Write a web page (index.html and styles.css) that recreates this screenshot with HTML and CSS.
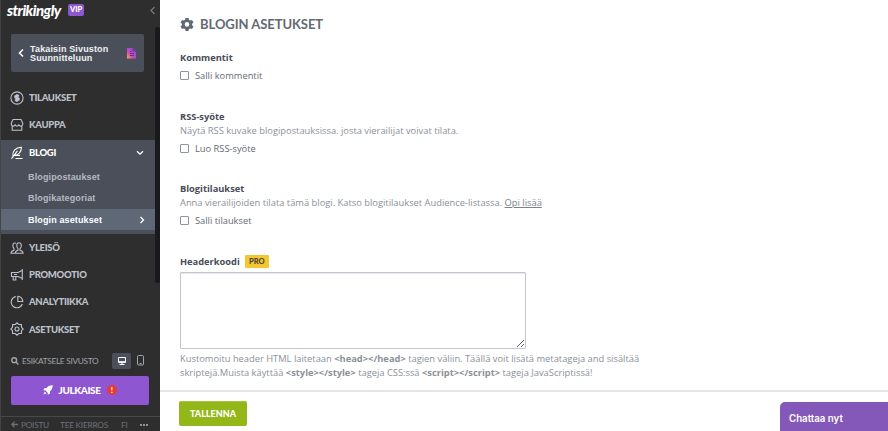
FILE: index.html
```html
<!DOCTYPE html>
<html lang="fi">
<head>
    <meta charset="UTF-8">
    <meta name="viewport" content="width=device-width, initial-scale=1.0">
    <title>Blogin asetukset</title>
    <link rel="stylesheet" href="styles.css">
</head>
<body>
    <aside class="sidebar">
        <div class="menu">
            <div class="brand">
                <span class="logo">strikingly</span>
                <span class="vip">VIP</span>
            </div>
            <a class="back">
                <svg class="back-arrow" width="6" height="10" viewBox="0 0 6 10"><path d="M5 1.5L1.5 5L5 8.5" /></svg>
                <span class="back-text">Takaisin Sivuston<br>Suunnitteluun</span>
                <svg class="site-icon" width="10" height="12" viewBox="0 0 10 12">
                    <defs>
                        <linearGradient id="site" x1="0" y1="1" x2="1" y2="0">
                            <stop offset="0" stop-color="#ffb13d" />
                            <stop offset="0.35" stop-color="#d04fb0" />
                            <stop offset="1" stop-color="#7b45e8" />
                        </linearGradient>
                    </defs>
                    <path d="M0 1h6l3 3v7.500H0z" fill="url(#site)" />
                    <path d="M6 1v3h3M3 4.5h1.5M3 6.5h4M3 8.5h4" fill="none" stroke="#54357c" stroke-width="0.9" />
                </svg>
            </a>
            <nav>
                <a class="item">
                    <svg class="icon" viewBox="0 0 14 14"><circle cx="7" cy="7" r="6.100" /><path d="M9.200 4.8H6.2a1.1 1.1 0 0 0 0 2.2h1.6a1.1 1.1 0 0 1 0 2.2H4.800M7 3.200v7.600" stroke-width="2" /></svg>
                    <span>TILAUKSET</span>
                </a>
                <a class="item kauppa">
                    <svg class="icon" viewBox="0 0 14 14"><path d="M3 1.500h8l1.7 3.700v1a1.9 1.9 0 0 1-3.8 0a1.9 1.9 0 0 1-3.8 0a1.9 1.9 0 0 1-3.8 0v-1zM2.2 8v4.3h9.6V8" /></svg>
                    <span>KAUPPA</span>
                </a>
                <div class="group">
                    <a class="item active">
                        <svg class="icon" viewBox="0 0 14 14"><path d="M2.800 9.8C2.300 5 5.500 1.500 11.500 1.200C11.200 5.500 9.500 8.700 4.500 9.400M1.500 12.700L7.500 4.800M5.500 12.500h7M4.500 9.400h5.500" /></svg>
                        <span>BLOGI</span>
                        <svg class="chevron" width="8" height="6" viewBox="0 0 8 6"><path d="M1 1.200L4 4.200L7 1.200" /></svg>
                    </a>
                    <a class="sub">Blogipostaukset</a>
                    <a class="sub">Blogikategoriat</a>
                    <a class="sub current">Blogin asetukset
                        <svg class="chevron" width="6" height="8" viewBox="0 0 6 8"><path d="M1.500 1L4.500 4L1.500 7" /></svg>
                    </a>
                </div>
                <a class="item">
                    <svg class="icon" viewBox="0 0 14 14"><path d="M5.300 12.300h7.700c0-2.100-1-2.600-3-3.100V7.800c1.100-1 1.500-2.300 1.300-3.800C10.900.9 7 .9 6.800 4c-.1 1.500.2 2.800 1.200 3.800v1.400c-1.800.5-2.700 1-2.700 3.100zM6 2.300C4 1.400 2.700 2.800 2.900 4.800c0 1.200.4 2.100 1.100 2.900v1.500c-1.800.5-2.900 1-3 3.100h4" /></svg>
                    <span>YLEISÖ</span>
                </a>
                <a class="item">
                    <svg class="icon" viewBox="0 0 14 14"><path d="M12.300 1v11M12 2.500L8 4.500H1.500v4H8l4 1.800M3.200 8.500v3.500h2.600V8.500M4 6.500h3" /></svg>
                    <span>PROMOOTIO</span>
                </a>
                <a class="item">
                    <svg class="icon" viewBox="0 0 14 14"><path d="M5.800 1.500A5.700 5.700 0 1 0 12.300 9M7.800 1.200v5.300h5A5.200 5.200 0 0 0 7.800 1.200z" /></svg>
                    <span>ANALYTIIKKA</span>
                </a>
                <a class="item">
                    <svg class="icon" viewBox="0 0 14 14"><path d="M7 .8L8.700 2.500L11.400 2.600L11.500 5.300L13.200 7L11.500 8.700L11.400 11.400L8.700 11.500L7 13.200L5.300 11.500L2.600 11.400L2.500 8.700L.8 7L2.500 5.300L2.600 2.600L5.300 2.500z" /><circle cx="7" cy="7" r="2" /></svg>
                    <span>ASETUKSET</span>
                </a>
            </nav>
            <div class="preview">
                <svg class="search" width="8" height="8" viewBox="0 0 8 8"><circle cx="3.200" cy="3.200" r="2.400" /><path d="M5 5l2.400 2.400" /></svg>
                <span class="preview-text">ESIKATSELE SIVUSTO</span>
                <span class="device selected">
                    <svg width="10" height="10" viewBox="0 0 10 10"><path d="M1.500 1.500h7v5h-7zM1.500 5.700h7M5 6.500v2M2.500 8.500h5" /></svg>
                </span>
                <span class="device">
                    <svg width="8" height="11" viewBox="0 0 8 11"><rect x="0.500" y="0.500" width="6" height="9.500" rx="1" /><path d="M2.500 8.500h2" /></svg>
                </span>
            </div>
            <button class="publish">
                <svg width="10" height="10" viewBox="0 0 10 10"><path d="M9.700.3C6.800.2 5 1.300 3.700 3H1.600L.3 5.200l2 .1L4.700 7.700l.1 2L7 8.400V6.300C8.700 5 9.800 3.200 9.700.3zM1.700 6.600L.5 9.500l2.900-1.200z" /></svg>
                <span class="publish-text">JULKAISE</span>
                <span class="alert">!</span>
            </button>
            <footer class="links">
                <svg width="7" height="7" viewBox="0 0 7 7"><path d="M3.500.6L.8 3.500l2.700 2.900M1 3.500h6" /></svg>
                <span class="exit">POISTU</span>
                <span class="tour">TEE KIERROS</span>
                <span class="lang">FI</span>
                <span class="dots"><i></i><i></i><i></i></span>
            </footer>
        </div>
        <div class="rail">
            <svg class="collapse" width="6" height="9" viewBox="0 0 6 9"><path d="M4.500 1L1 4.500L4.500 8" /></svg>
            <div class="thumb"></div>
        </div>
    </aside>

    <main class="content">
        <div class="settings">
            <h1>
                <svg width="14" height="14" viewBox="0 0 14 14"><path fill-rule="evenodd" d="M5.500 1h3l.4 1.800 1.300.7 1.800-.6 1.500 2.600-1.400 1.200v1.500l1.400 1.200-1.500 2.600-1.800-.6-1.300.7-.4 1.800h-3l-.4-1.800-1.300-.7-1.800.6L.5 9.400l1.400-1.200V6.700L.5 5.500 2 2.900l1.800.6 1.300-.7zM7 5.100a2.300 2.300 0 1 0 0 4.600a2.300 2.300 0 1 0 0-4.600z" /></svg>
                <span>BLOGIN ASETUKSET</span>
            </h1>

            <section class="comments">
                <h2>Kommentit</h2>
                <label class="check"><input type="checkbox"><span>Salli kommentit</span></label>
            </section>

            <section class="rss">
                <h2>RSS-syöte</h2>
                <p>Näytä RSS kuvake blogipostauksissa. josta vierailijat voivat tilata.</p>
                <label class="check"><input type="checkbox"><span>Luo RSS-syöte</span></label>
            </section>

            <section class="subscriptions">
                <h2>Blogitilaukset</h2>
                <p>Anna vierailijoiden tilata tämä blogi. Katso blogitilaukset Audience-listassa. <a>Opi lisää</a></p>
                <label class="check"><input type="checkbox"><span>Salli tilaukset</span></label>
            </section>

            <section class="header-code">
                <h2>Headerkoodi <span class="pro">PRO</span></h2>
                <textarea></textarea>
                <p>Kustomoitu header HTML laitetaan <b>&lt;head&gt;&lt;/head&gt;</b> tagien väliin. Täällä voit lisätä metatageja and sisältää<br>skriptejä.Muista käyttää <b>&lt;style&gt;&lt;/style&gt;</b> tageja CSS:ssä <b>&lt;script&gt;&lt;/script&gt;</b> tageja JavaScriptissä!</p>
            </section>
        </div>
        <div class="actions">
            <button class="save">TALLENNA</button>
        </div>
    </main>
    <div class="chat">Chattaa nyt</div>
</body>
</html>
```

FILE: styles.css
```css
* {
    box-sizing: border-box;
}

body {
    display: flex;
    height: 431px;
    margin: 0;
    overflow: hidden;
    font-family: "Open Sans", sans-serif;
    background-color: #fff;
}

h1, h2, p {
    margin: 0;
}

button {
    border: none;
    padding: 0;
}

svg {
    flex: none;
}

/* Sidebar */
.sidebar {
    display: flex;
    flex: none;
    width: 160px;
    background-color: #2e2e2e;
    border-left: 1px solid #444;
}

.menu {
    width: 154px;
    font-family: Lato, sans-serif;
}

.brand {
    display: flex;
    align-items: center;
    height: 20px;
    padding-left: 6px;
}

.logo {
    width: 61px;
    color: #fff;
    font-size: 15px;
    font-weight: 900;
    font-style: italic;
    letter-spacing: -0.55px;
    line-height: 18px;
}

.vip {
    width: 16px;
    height: 12px;
    border-radius: 2px;
    background-color: #8e56d0;
    color: #fff;
    font-size: 7.5px;
    font-weight: 900;
    line-height: 12px;
    text-align: center;
}

.back {
    display: flex;
    align-items: center;
    width: 133px;
    height: 38px;
    margin: 14px 0 12px 10px;
    padding: 0 7px;
    border-radius: 2px;
    background-color: #4b4f59;
}

.back-arrow {
    fill: none;
    stroke: #fff;
    stroke-width: 1.5;
}

.back-text {
    width: 91px;
    margin: 1px 6px 0;
    color: #f0f1f4;
    font-family: "Liberation Sans", sans-serif;
    font-size: 9px;
    font-weight: bold;
    line-height: 9px;
    letter-spacing: 0.15px;
    white-space: nowrap;
}

.item {
    display: flex;
    align-items: center;
    height: 27.2px;
    padding: 0 11px 0 9px;
    color: #bcc1cb;
    font-size: 9.5px;
    font-weight: 900;
    letter-spacing: -0.3px;
}

.kauppa {
    height: 28.8px;
    padding-bottom: 2px;
}

.icon {
    width: 14px;
    height: 14px;
    margin-right: 5px;
    fill: none;
    stroke: currentColor;
    stroke-width: 1.1;
}

.group {
    height: 94px;
    background-color: #4b4f59;
}

.active {
    height: 26px;
    color: #fff;
}

.chevron {
    margin-left: auto;
    fill: none;
    stroke: #fff;
    stroke-width: 1.3;
}

.sub {
    display: flex;
    align-items: center;
    height: 21.5px;
    padding: 0 10px 0 27px;
    color: #b5bac4;
    font-family: "Liberation Sans", sans-serif;
    font-size: 9px;
    font-weight: bold;
    letter-spacing: 0.13px;
}

.current {
    background-color: #5e6877;
    color: #fff;
}

.preview {
    display: flex;
    align-items: center;
    height: 16px;
    margin-top: 10px;
    padding-left: 10px;
    color: #a0a4ab;
}

.search {
    fill: none;
    stroke: currentColor;
    stroke-width: 1.4;
}

.preview-text {
    width: 90px;
    padding-left: 3px;
    font-size: 8.3px;
    letter-spacing: -0.3px;
    white-space: nowrap;
}

.device {
    display: flex;
    align-items: center;
    justify-content: center;
    width: 19px;
    height: 16px;
    border-radius: 2px;
    fill: none;
    stroke: #a0a4ab;
    stroke-width: 1;
}

.selected {
    margin-left: 3px;
    background-color: #4b4f59;
    stroke: #fff;
}

.publish {
    display: flex;
    align-items: center;
    width: 138px;
    height: 29px;
    margin: 7px 0 11px 10px;
    padding-left: 32px;
    border-radius: 2px;
    background-color: #8e56d0;
    color: #fff;
    fill: #fff;
    font-family: Lato, sans-serif;
    font-size: 10px;
    font-weight: 900;
}

.publish-text {
    width: 48px;
    padding-left: 5px;
    letter-spacing: -0.4px;
    white-space: nowrap;
}

.alert {
    flex: none;
    width: 10px;
    height: 10px;
    margin-left: 6px;
    border-radius: 50%;
    background-color: #e93a32;
    font-size: 8px;
    line-height: 10px;
}

.links {
    display: flex;
    align-items: center;
    width: 159px;
    height: 15px;
    padding: 2px 0 0 10px;
    border-top: 1px solid #484848;
    color: #6d7077;
    font-size: 8.3px;
    letter-spacing: -0.25px;
    fill: none;
    stroke: #6d7077;
    stroke-width: 1.3;
}

.links span {
    white-space: nowrap;
}

.exit {
    width: 39px;
    padding-left: 3px;
}

.tour {
    width: 61px;
    padding-left: 3px;
}

.lang {
    width: 19px;
    padding-left: 3px;
}

.dots {
    display: flex;
    gap: 1px;
    padding-left: 3px;
}

.dots i {
    width: 2px;
    height: 2px;
    border-radius: 50%;
    background-color: #b0b4bb;
}

.rail {
    width: 5px;
    height: 415px;
}

.collapse {
    display: block;
    margin: 6px 0 12px -5px;
    fill: none;
    stroke: #777b83;
    stroke-width: 1.2;
}

.thumb {
    height: 256px;
    border-radius: 3px;
    background-color: #191a1d;
}

/* Settings */
.content {
    display: flex;
    flex: 1;
    flex-direction: column;
}

.settings {
    height: 390px;
    padding: 14px 20px 0;
}

h1 {
    display: flex;
    align-items: center;
    height: 20px;
    color: #636972;
    fill: #636972;
    font-family: Lato, sans-serif;
    font-size: 13px;
    font-weight: bold;
}

h1 span {
    margin-left: 6px;
    letter-spacing: -0.05px;
}

h2 {
    display: flex;
    align-items: center;
    height: 14px;
    color: #474c58;
    font-size: 9.3px;
    font-weight: bold;
}

p {
    color: #8b919a;
    font-size: 9.33px;
    line-height: 14px;
    white-space: nowrap;
}

p a {
    color: #7c838d;
    text-decoration: underline;
}

h2 + p {
    padding-top: 1px;
}

p + .check {
    margin-top: 3px;
}

.comments {
    margin-top: 16px;
}

.rss {
    margin-top: 27px;
}

.subscriptions {
    margin-top: 26px;
}

.header-code {
    margin-top: 27px;
}

.check {
    display: flex;
    align-items: center;
    height: 14px;
    margin-top: 4px;
    color: #636a76;
    font-size: 9.3px;
}

.check input {
    appearance: none;
    width: 9px;
    height: 9px;
    margin: 0 6px 0 0;
    border: 1px solid #8d929b;
    border-radius: 1px;
}

.pro {
    width: 24px;
    height: 13px;
    margin-left: 5px;
    border-radius: 1px;
    background-color: #f3c632;
    color: #4b4532;
    font-family: Lato, sans-serif;
    font-size: 7.5px;
    font-weight: 900;
    line-height: 13px;
    text-align: center;
}

textarea {
    display: block;
    width: 346px;
    height: 77px;
    margin: 4px 0 3px;
    border: 1px solid #c3c6cc;
    border-radius: 1px;
    box-shadow: inset 0 1px 1px #e4e7ec;
}

.actions {
    flex: 1;
    padding: 9px 19px 0;
    border-top: 2px solid #e5e5e5;
}

.save {
    display: block;
    width: 68px;
    height: 25px;
    padding-bottom: 1px;
    border-radius: 2px;
    background-color: #93b719;
    box-shadow: inset 0 1px #a6c642;
    color: #fff;
    font-family: Lato, sans-serif;
    font-size: 9px;
    font-weight: 900;
}

/* Chat sits over the bottom bar */
.chat {
    position: absolute;
    right: 0;
    bottom: 0;
    width: 108px;
    height: 29px;
    padding: 0 9px;
    border-radius: 5px 0 0 0;
    background-color: #8358b8;
    color: #fff;
    font-family: Inter, sans-serif;
    font-size: 9.7px;
    font-weight: 600;
    line-height: 33px;
}
```
